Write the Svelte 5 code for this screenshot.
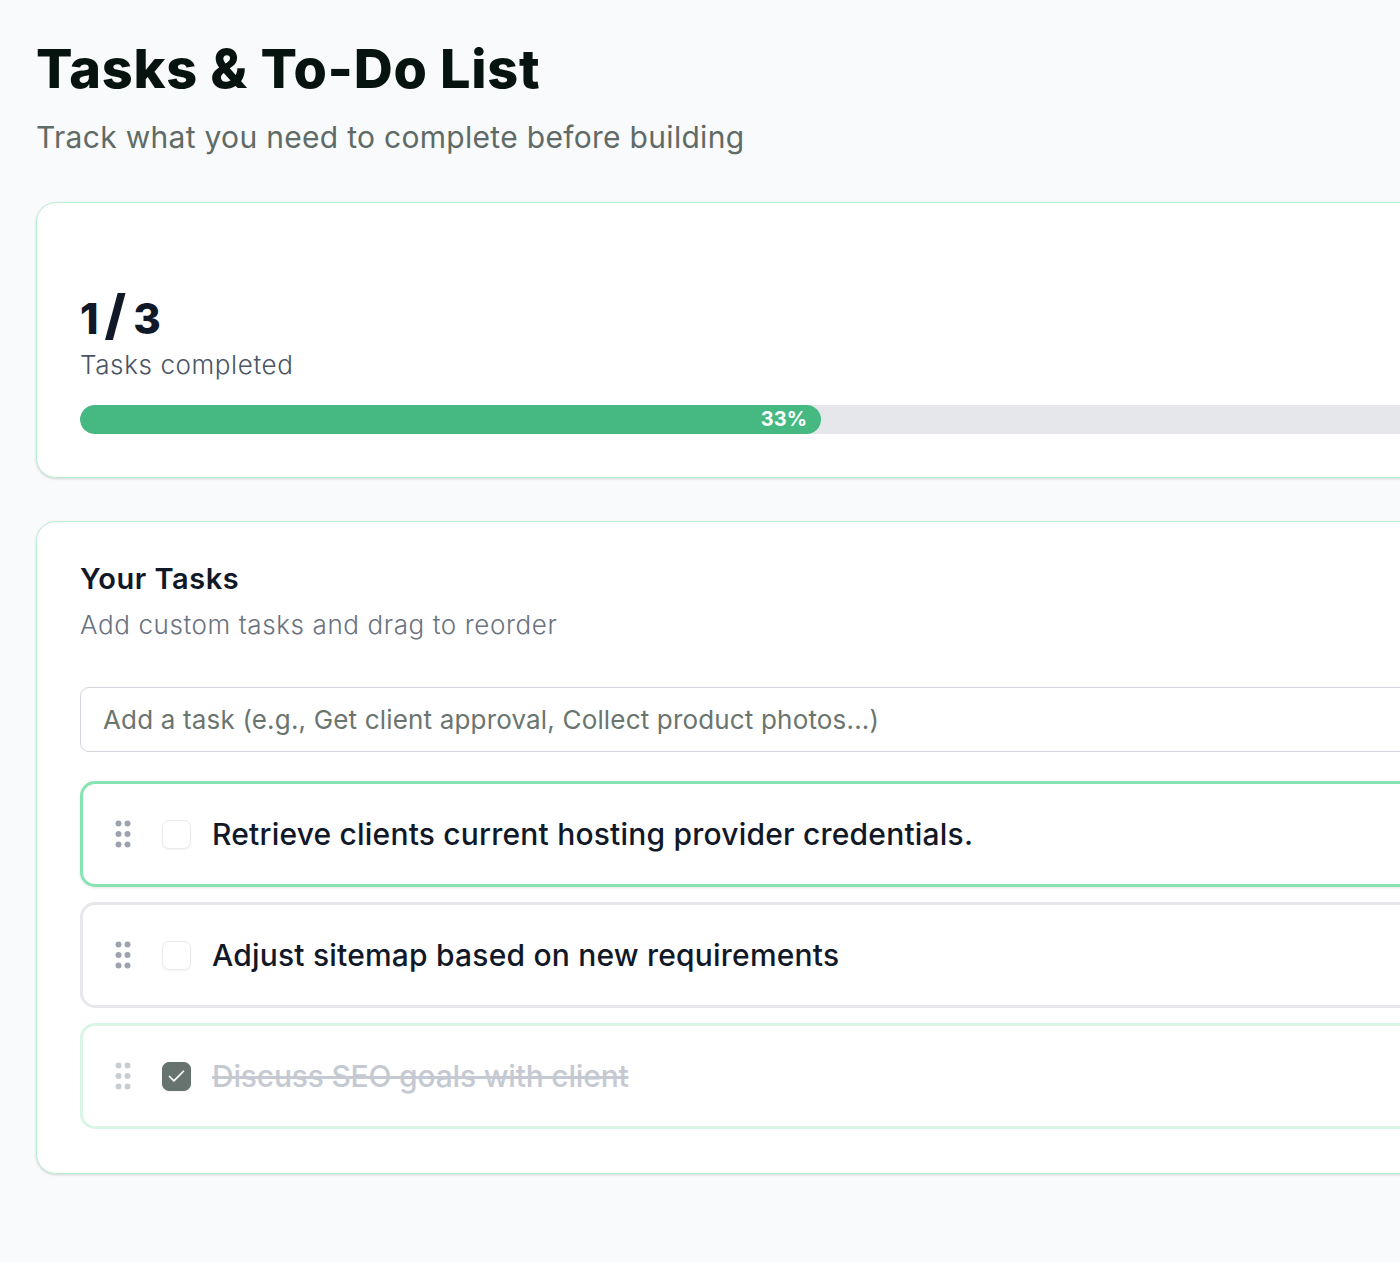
<script>
  let newTask = $state('');
  let tasks = $state([
    { id: 1, title: 'Retrieve clients current hosting provider credentials.', done: false, active: true },
    { id: 2, title: 'Adjust sitemap based on new requirements', done: false, active: false },
    { id: 3, title: 'Discuss SEO goals with client', done: true, active: false }
  ]);

  const doneCount = $derived(tasks.filter((t) => t.done).length);
  const percent = $derived((doneCount / tasks.length) * 100);
</script>

<div class="page">
  <header class="head">
    <h1>Tasks &amp; To-Do List</h1>
    <p>Track what you need to complete before building</p>
  </header>

  <section class="card progress-card">
    <div class="count">{doneCount}<span class="slash">/</span>{tasks.length}</div>
    <div class="count-label">Tasks completed</div>
    <div class="track">
      <div class="fill" style="width: {percent}%">
        <span>{Math.round(percent)}%</span>
      </div>
    </div>
  </section>

  <section class="card list-card">
    <h2>Your Tasks</h2>
    <p class="hint">Add custom tasks and drag to reorder</p>
    <input
      class="add"
      type="text"
      placeholder="Add a task (e.g., Get client approval, Collect product photos...)"
      bind:value={newTask}
    />
    <ul class="tasks">
      {#each tasks as task (task.id)}
        <li class="task" class:active={task.active} class:done={task.done}>
          <svg class="grip" width="16" height="28" viewBox="0 0 16 28" aria-hidden="true">
            <circle cx="3.5" cy="3.5" r="3" />
            <circle cx="12.5" cy="3.5" r="3" />
            <circle cx="3.5" cy="14" r="3" />
            <circle cx="12.5" cy="14" r="3" />
            <circle cx="3.5" cy="24.5" r="3" />
            <circle cx="12.5" cy="24.5" r="3" />
          </svg>
          <span class="check">
            {#if task.done}
              <svg width="21" height="21" viewBox="0 0 24 24" fill="none" stroke="#fff" stroke-width="2" stroke-linecap="round" stroke-linejoin="round">
                <path d="M20 6 9 17l-5-5" />
              </svg>
            {/if}
          </span>
          <span class="title">{task.title}</span>
        </li>
      {/each}
    </ul>
  </section>
</div>

<style>
  :global(body) {
    margin: 0;
    background: #f9fafb;
    overflow-x: hidden;
  }

  .page {
    width: 2311px;
    height: 1262px;
    box-sizing: border-box;
    padding: 36px 0 0 36px;
    font-family: Inter, "Liberation Sans", sans-serif;
    color: #111827;
  }

  .head h1 {
    margin: 0;
    font-size: 54px;
    line-height: 66px;
    font-weight: 800;
    color: #07130e;
    letter-spacing: 0.7px;
  }

  .head p {
    margin: 18px 0 0;
    font-size: 30px;
    line-height: 34px;
    font-weight: 400;
    color: #5f6b66;
    letter-spacing: 0.3px;
  }

  .card {
    box-sizing: border-box;
    width: 2311px;
    background: #fff;
    border: 1px solid #b8f0d2;
    border-radius: 20px;
    box-shadow: 0 1px 3px rgba(0, 0, 0, 0.1), 0 1px 2px rgba(0, 0, 0, 0.06);
    padding: 0 43px;
  }

  .progress-card {
    margin-top: 48px;
    height: 276px;
    padding-top: 82px;
  }

  .count {
    font-size: 42px;
    line-height: 60px;
    font-weight: 800;
    color: #111827;
  }

  .slash {
    font-size: 54px;
    margin: 0 7px 0 6px;
  }

  .count-label {
    font-size: 26px;
    line-height: 32px;
    font-weight: 300;
    color: #4b5563;
    letter-spacing: 0.6px;
  }

  .track {
    margin-top: 24px;
    height: 29px;
    background: #e5e7eb;
    border-radius: 15px;
    overflow: hidden;
  }

  .fill {
    height: 100%;
    background: #46b982;
    border-radius: 15px;
    display: flex;
    align-items: center;
    justify-content: flex-end;
    padding: 0 14px 2px 0;
    box-sizing: border-box;
  }

  .fill span {
    color: #fff;
    font-size: 20px;
    font-weight: 700;
  }

  .list-card {
    margin-top: 43px;
    height: 653px;
    padding-top: 38px;
  }

  h2 {
    margin: 0;
    font-size: 29px;
    line-height: 38px;
    font-weight: 600;
    color: #111827;
    letter-spacing: 0.5px;
  }

  .hint {
    margin: 8px 0 0;
    font-size: 26px;
    line-height: 38px;
    font-weight: 300;
    color: #6b7280;
    letter-spacing: 0.6px;
  }

  .add {
    display: block;
    box-sizing: border-box;
    width: 100%;
    height: 65px;
    margin-top: 43px;
    padding: 0 22px;
    border: 1px solid #d1d5db;
    border-radius: 9px;
    background: #fff;
    font: 400 26px Inter, "Liberation Sans", sans-serif;
    letter-spacing: 0.17px;
    color: #111827;
    outline: none;
  }

  .add::placeholder {
    color: #6b7570;
    opacity: 1;
  }

  .tasks {
    list-style: none;
    margin: 29px 0 0;
    padding: 0;
    display: flex;
    flex-direction: column;
    gap: 15px;
  }

  .task {
    box-sizing: border-box;
    height: 106px;
    display: flex;
    align-items: center;
    border: 3px solid #e5e7eb;
    border-radius: 15px;
    padding-left: 32px;
    background: #fff;
  }

  .task.active {
    border-color: #86e4b2;
    box-shadow: 0 1px 3px rgba(0, 0, 0, 0.1);
  }

  .task.done {
    border-color: #d9f5e6;
  }

  .grip {
    fill: #9ca3af;
    flex: none;
  }

  .task.done .grip {
    fill: #c8ccd3;
  }

  .check {
    box-sizing: border-box;
    flex: none;
    width: 29px;
    height: 29px;
    margin-left: 31px;
    border: 1px solid #e8eaed;
    border-radius: 7px;
    background: #fff;
    box-shadow: 0 1px 2px rgba(0, 0, 0, 0.05);
    display: flex;
    align-items: center;
    justify-content: center;
  }

  .task.done .check {
    background: #66736f;
    border-color: #66736f;
  }

  .title {
    margin-left: 21px;
    font-size: 30px;
    line-height: 40px;
    font-weight: 500;
    color: #111827;
    letter-spacing: 0.2px;
  }

  .task.done .title {
    color: #c5c9d1;
    text-decoration: line-through;
    letter-spacing: -0.2px;
  }
</style>
